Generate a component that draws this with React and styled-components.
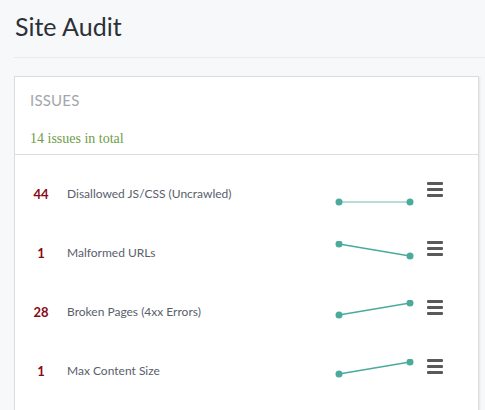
import React from 'react'
import styled, { createGlobalStyle } from 'styled-components'

const GlobalStyle = createGlobalStyle`
  body {
    margin: 0;
    background: #f7f8fa;
    font-family: Lato, "Open Sans", sans-serif;
  }
`

const Page = styled.div`
  padding: 0 0 0 14px;
  height: 410px;
  overflow: hidden;
`

const Header = styled.div`
  height: 57px;
  border-bottom: 1px solid #e8eaed;
  display: flex;
  align-items: center;
`

const Title = styled.h1`
  margin: 0 0 6px 1px;
  font-size: 25px;
  font-weight: 400;
  color: #2c3138;
`

const Card = styled.div`
  margin: 18px 6px 0 0;
  background: #fff;
  border: 1px solid #dcdcdc;
  box-shadow: 1px 1px 2px rgba(0, 0, 0, 0.08);
`

const CardHead = styled.div`
  padding: 14px 15px 7px;
  border-bottom: 1px solid #dedede;
`

const Heading = styled.div`
  font-size: 15px;
  color: #a3a6ab;
  letter-spacing: 0.2px;
`

const Total = styled.div`
  margin-top: 22px;
  font-family: "Liberation Serif", serif;
  font-size: 14px;
  color: #6e9d48;
`

const List = styled.div`
  padding: 9px 0 40px;
`

const Row = styled.div`
  height: 59px;
  display: flex;
  align-items: center;
  padding-right: 35px;
`

const Count = styled.div`
  width: 52px;
  text-align: center;
  font-size: 13px;
  font-weight: 700;
  color: #870a12;
`

const Label = styled.div`
  flex: 1;
  font-size: 12px;
  color: #59606c;
`

const Menu = styled.div`
  width: 16px;
  margin: 0 0 8px 11px;
  display: flex;
  flex-direction: column;
  gap: 3px;
  span {
    display: block;
    height: 3px;
    background: #5a5a5a;
    border-radius: 1px;
  }
`

const Spark = ({ from, to, light }) => (
  <svg width="82" height="24" viewBox="0 0 82 24">
    <line x1="5" y1={from} x2="76" y2={to} stroke={light ? '#9ed2c8' : '#4aab9c'} strokeWidth="1.6" />
    <circle cx="5" cy={from} r="3.5" fill="#4aab9c" />
    <circle cx="76" cy={to} r="3.5" fill="#4aab9c" />
  </svg>
)

const issues = [
  { count: 44, label: 'Disallowed JS/CSS (Uncrawled)', from: 20, to: 20, light: true },
  { count: 1, label: 'Malformed URLs', from: 3, to: 15 },
  { count: 28, label: 'Broken Pages (4xx Errors)', from: 15, to: 3 },
  { count: 1, label: 'Max Content Size', from: 15, to: 3 },
]

export default function App() {
  return (
    <Page>
      <GlobalStyle />
      <Header>
        <Title>Site Audit</Title>
      </Header>
      <Card>
        <CardHead>
          <Heading>ISSUES</Heading>
          <Total>14 issues in total</Total>
        </CardHead>
        <List>
          {issues.map((it, i) => (
            <Row key={i}>
              <Count>{it.count}</Count>
              <Label>{it.label}</Label>
              <Spark from={it.from} to={it.to} light={it.light} />
              <Menu>
                <span />
                <span />
                <span />
              </Menu>
            </Row>
          ))}
        </List>
      </Card>
    </Page>
  )
}
